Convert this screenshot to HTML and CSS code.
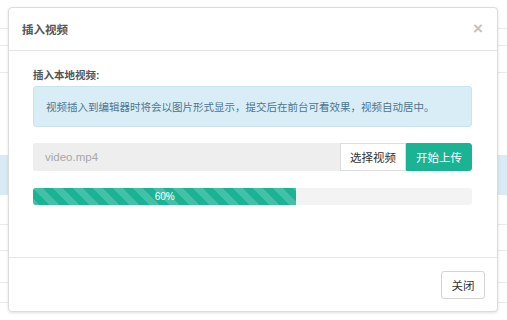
FILE: index.html
```html
<!doctype html>
<html>
<head>
    <meta charset="utf-8">
    <title>插入视频</title>
    <link rel="stylesheet" href="styles.css">
</head>
<body>
<div class='page'>
	<div class='row r1'></div>
	<div class='row r2'></div>
	<div class='row r3'></div>
	<div class='row r4'></div>
	<div class='row r5 sel'></div>
	<div class='row r6'></div>
	<div class='row r7'></div>
	<div class='row r8'></div>
	<div class='row r9'></div>
</div>

<div class='modal'>
	<div class='modal-head'>
		<h4>插入视频</h4>
		<span class='close'>×</span>
	</div>
	<div class='modal-body'>
		<div class='label'>插入本地视频:</div>
		<div class='alert'>视频插入到编辑器时将会以图片形式显示，提交后在前台可看效果，视频自动居中。</div>
		<div class='group'>
			<div class='field'>video.mp4</div>
			<button class='btn pick'>选择视频</button>
			<button class='btn up'>开始上传</button>
		</div>
		<div class='progress'>
			<div class='bar' style="width: 60%">60%</div>
		</div>
	</div>
	<div class='modal-foot'>
		<button class='btn shut'>关闭</button>
	</div>
</div>
</body>
</html>
```

FILE: styles.css
```css
*{margin: 0;padding: 0;box-sizing: border-box;}
body{
	background: #fff;
	font-family: "Liberation Sans", "Noto Sans CJK SC", sans-serif;
	color: #555;
}

/* table rows behind the dialog */
.page{width: 507px;}
.row{border-bottom: 1px solid #e7eaec;}
.r1{height: 29px;}
.r2{height: 17px;}
.r3{height: 27px;}
.r4{height: 82px;border-bottom: none;}
.r5{height: 40px;}
.r6{height: 30px;}
.r7{height: 26px;}
.r8{height: 32px;}
.r9{height: 20px;}
.sel{background: #d9ebf5;border-bottom: none;}

.modal{
	position: absolute;left: 8px;top: 7px;
	width: 490px;height: 305px;
	background: #fff;
	border: 1px solid #dcdcdc;border-radius: 4px;
	box-shadow: 0 1px 3px rgba(0,0,0,0.12);
	display: flex;flex-direction: column;
}
.modal-head{
	height: 43px;
	border-bottom: 1px solid #e5e5e5;
	display: flex;align-items: center;justify-content: space-between;
	padding: 0 14px 0 13px;
}
.modal-head h4{font-size: 11.5px;font-weight: bold;color: #555;}
.close{font-size: 17px;font-weight: bold;color: #c2c2c2;line-height: 1;margin-top: -1px;}

.modal-body{
	padding: 16px 25px 0 24px;
	flex: 1;
}
.label{font-size: 10.5px;font-weight: bold;color: #555;line-height: 16px;margin-bottom: 3px;}
.alert{
	height: 41px;
	background: #d9edf7;border: 1px solid #c7e4f0;border-radius: 3px;
	color: #4d7690;font-size: 10.5px;
	display: flex;align-items: center;
	padding: 0 12px;
	margin-bottom: 16px;
}
.group{display: flex;height: 28px;margin-bottom: 17px;}
.field{
	flex: 1;
	background: #eee;border-radius: 2px 0 0 2px;
	color: #a8a8a8;font-size: 11.5px;
	display: flex;align-items: center;padding-left: 12px;
}
.btn{
	font-family: inherit;font-size: 11.5px;
	border: 1px solid #ddd;background: #fff;color: #333;
	cursor: pointer;
}
.pick{width: 66px;}
.up{width: 66px;background: #1ab394;border-color: #1ab394;color: #fff;border-radius: 0 3px 3px 0;}

.progress{height: 17px;background: #f3f3f3;border-radius: 3px;overflow: hidden;}
.bar{
	height: 100%;
	background-color: #1ab394;
	background-image: linear-gradient(45deg, rgba(255,255,255,0.18) 25%, transparent 25%, transparent 50%, rgba(255,255,255,0.18) 50%, rgba(255,255,255,0.18) 75%, transparent 75%, transparent);
	background-size: 20px 20px;
	color: #fff;font-size: 10px;
	display: flex;align-items: center;justify-content: center;
}

.modal-foot{
	height: 54px;
	border-top: 1px solid #e5e5e5;
	display: flex;align-items: center;justify-content: flex-end;
	padding: 0 12px;
}
.shut{width: 44px;height: 28px;border-radius: 3px;color: #333;border-color: #d5d5d5;}
```
